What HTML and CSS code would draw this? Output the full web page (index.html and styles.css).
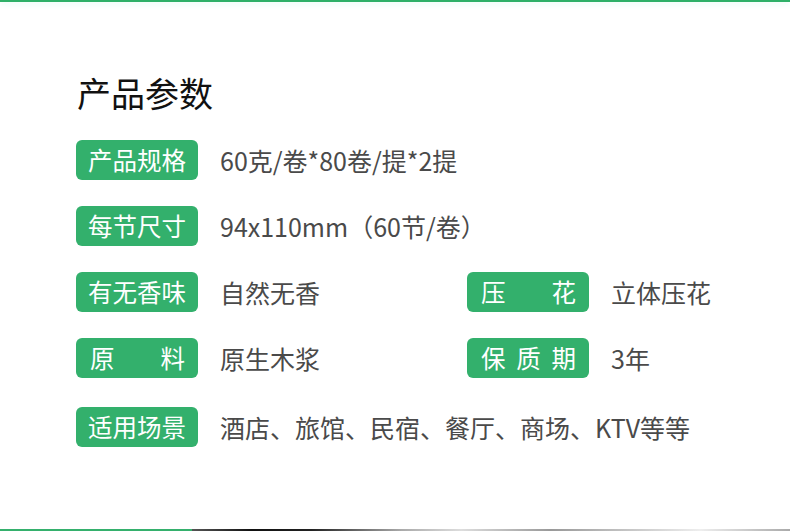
FILE: index.html
```html
<!DOCTYPE html>
<html lang="zh-CN">
<head>
<meta charset="utf-8">
<title>产品参数</title>
<link rel="stylesheet" href="styles.css">
</head>
<body>
<div class="page">
  <div class="top-line"></div>
  <main class="content">
    <h1 class="title">产品参数</h1>
    <div class="rows">
      <div class="row">
        <div class="pair">
          <span class="badge">产品规格</span>
          <span class="value">60克/卷*80卷/提*2提</span>
        </div>
      </div>
      <div class="row">
        <div class="pair">
          <span class="badge">每节尺寸</span>
          <span class="value">94x110mm（60节/卷）</span>
        </div>
      </div>
      <div class="row">
        <div class="pair half">
          <span class="badge">有无香味</span>
          <span class="value">自然无香</span>
        </div>
        <div class="pair">
          <span class="badge spread"><span>压</span><span>花</span></span>
          <span class="value">立体压花</span>
        </div>
      </div>
      <div class="row">
        <div class="pair half">
          <span class="badge spread"><span>原</span><span>料</span></span>
          <span class="value">原生木浆</span>
        </div>
        <div class="pair">
          <span class="badge spread"><span>保</span><span>质</span><span>期</span></span>
          <span class="value">3年</span>
        </div>
      </div>
      <div class="row last">
        <div class="pair">
          <span class="badge">适用场景</span>
          <span class="value">酒店、旅馆、民宿、餐厅、商场、KTV等等</span>
        </div>
      </div>
    </div>
  </main>
  <div class="bottom-line">
    <div class="bottom-green"></div>
    <div class="bottom-photo"></div>
  </div>
</div>
</body>
</html>
```

FILE: styles.css
```css
* { box-sizing: border-box; }
html, body { margin: 0; padding: 0; background: #fff; }
body {
  font-family: "Noto Sans CJK SC", "Noto Sans", sans-serif;
  color: #444;
}
.page {
  width: 790px;
  height: 531px;
  display: flex;
  flex-direction: column;
  overflow: hidden;
}
.top-line {
  height: 2px;
  background: #2fb068;
  box-shadow: 0 2px 5px rgba(200, 250, 235, 0.6);
}
.content {
  padding: 0 0 0 76px;
}
.title {
  margin: 74px 0 0 1px;
  font-size: 34px;
  line-height: 34px;
  font-weight: 400;
  color: #111;
  letter-spacing: 0;
}
.rows {
  margin-top: 30px;
  display: flex;
  flex-direction: column;
  gap: 26px;
}
.row {
  display: flex;
  height: 40px;
}
.row.last { margin-top: 3px; }
.pair {
  display: flex;
  align-items: center;
}
.pair.half { width: 391px; }
.badge {
  width: 122px;
  height: 40px;
  border-radius: 6px;
  background: #33b06c;
  color: #fff;
  font-size: 24.5px;
  line-height: 40px;
  padding: 0 11px;
  display: flex;
  align-items: center;
  justify-content: center;
  white-space: nowrap;
}
.badge.spread { justify-content: space-between; padding: 0 13px 0 14px; }
.value {
  margin-left: 22px;
  font-size: 25px;
  color: #4a4a4a;
  white-space: nowrap;
}
.bottom-line {
  margin-top: auto;
  height: 2px;
  display: flex;
}
.bottom-green { width: 192px; background: #35b06d; }
.bottom-photo {
  flex: 1;
  background: linear-gradient(90deg, #555 0%, #111 10%, #222 20%, #aaa 35%, #ddd 45%, #999 60%, #ccc 75%, #eee 85%, #aaa 100%);
}
```
